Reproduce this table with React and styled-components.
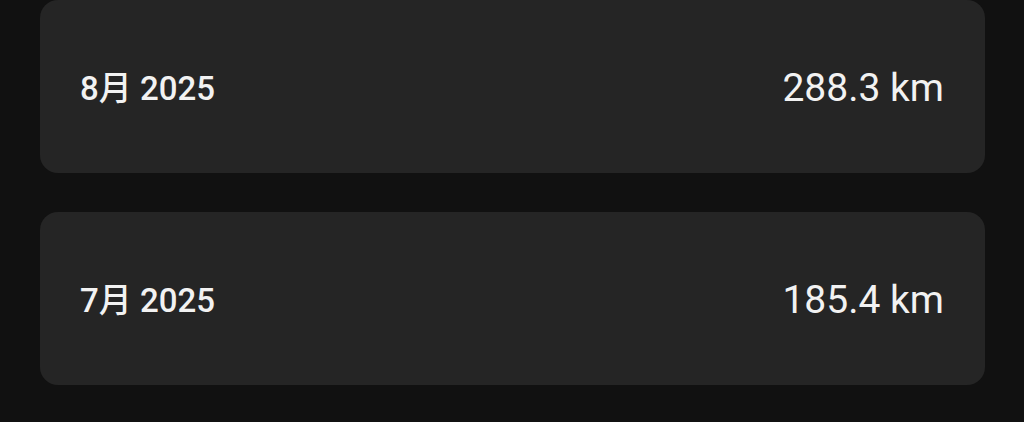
import React from 'react'
import styled, { createGlobalStyle } from 'styled-components'

const months = [
  { label: '8月 2025', distance: '288.3 km' },
  { label: '7月 2025', distance: '185.4 km' },
]

const App = () => {
  return (
    <>
      <GlobalStyle />
      <List>
        {months.map((m) => (
          <Card key={m.label}>
            <Month>{m.label}</Month>
            <Distance>{m.distance}</Distance>
          </Card>
        ))}
      </List>
    </>
  )
}

export default App

const GlobalStyle = createGlobalStyle`
  html, body {
    margin: 0;
    padding: 0;
    background: #111111;
    height: 100%;
  }
  body {
    font-family: Roboto, "Noto Sans CJK SC", sans-serif;
    color: #f2f2f2;
  }
`;

const List = styled.div`
  display: flex;
  flex-direction: column;
  gap: 39px;
  padding: 0 39px 0 40px;
`;

const Card = styled.div`
  display: flex;
  align-items: center;
  justify-content: space-between;
  height: 173px;
  padding: 0 41px 0 40px;
  background: #252525;
  border-radius: 18px;
`;

const Month = styled.span`
  font-size: 33px;
  font-weight: 500;
  color: #f2f2f2;
  margin-top: -2px;
`;

const Distance = styled.span`
  font-size: 39px;
  font-weight: 400;
  color: #f2f2f2;
  margin-top: 2px;
`;
